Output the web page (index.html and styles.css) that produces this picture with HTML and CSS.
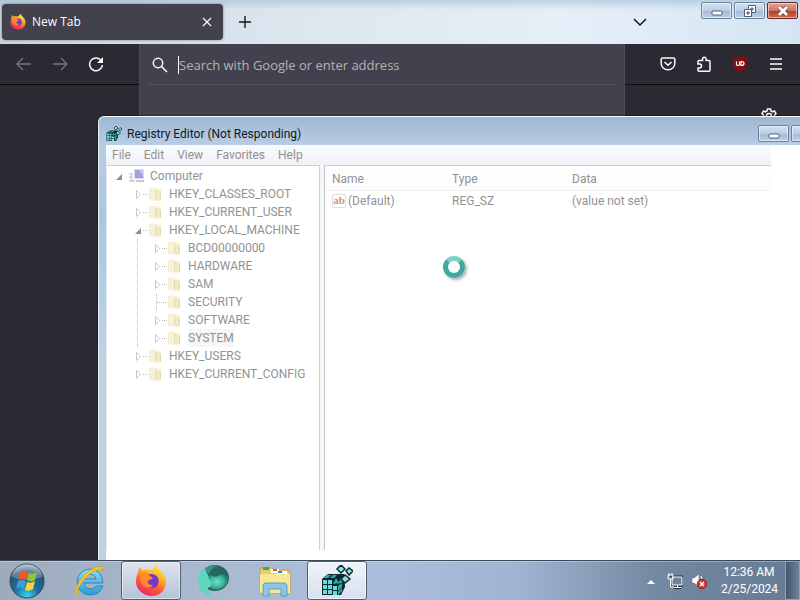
FILE: index.html
```
<!DOCTYPE html>
<html lang="en">
    <head>
        <meta charset="UTF-8" />
        <meta name="viewport" content="width=device-width, initial-scale=1.0"/>
        <title>Desktop</title>
        <link rel="stylesheet" href="styles.css">
    </head>
    <body>
        <!-- shared icons -->
        <svg class="sprite" aria-hidden="true">
            <defs>
                <linearGradient id="fx-body" x1="0.8" y1="0" x2="0.3" y2="1">
                    <stop offset="0" stop-color="#fff04a"/>
                    <stop offset="0.35" stop-color="#ffb02c"/>
                    <stop offset="0.65" stop-color="#ff5a36"/>
                    <stop offset="1" stop-color="#e8256f"/>
                </linearGradient>
                <linearGradient id="folder-fill">
                    <stop offset="0" stop-color="#f4f0d2"/>
                    <stop offset="1" stop-color="#faf7e4"/>
                </linearGradient>
                <radialGradient id="orb-fill" cx="0.5" cy="0.95" r="0.95">
                    <stop offset="0" stop-color="#3fd0f2"/>
                    <stop offset="0.4" stop-color="#166f9f"/>
                    <stop offset="0.75" stop-color="#2d5571"/>
                    <stop offset="1" stop-color="#a9c0ce"/>
                </radialGradient>
                <linearGradient id="ie-fill" x1="0" y1="0" x2="0" y2="1">
                    <stop offset="0" stop-color="#8fdcf8"/>
                    <stop offset="1" stop-color="#2a9bd8"/>
                </linearGradient>
                <radialGradient id="swirl-fill" cx="0.4" cy="0.5" r="0.6">
                    <stop offset="0" stop-color="#6fe0c6"/>
                    <stop offset="0.6" stop-color="#3fb39d"/>
                    <stop offset="1" stop-color="#24756d"/>
                </radialGradient>
            </defs>
            <symbol id="firefox" viewBox="0 0 32 32">
                <path d="M3 7c0-2 1-4 2-5 1 2 2 3 3 3 2-1 4-1 6 0l4-1c0-2 2-4 4-4 0 3 2 4 4 6 3 3 5 6 5 11 0 8-6 14-14 14S1 25 1 17c0-4 1-7 2-10z" fill="url(#fx-body)"/>
                <path d="M12 10c4-2 9-1 11 3 2 5-1 10-6 10s-8-3-8-7c0-2 3-3 4-4z" fill="#7139cf"/>
                <path d="M5 9c3-1 5-2 8-1l2 3c1 1 2 1 3 2-1 2-4 1-5 3s1 4 5 4c-2 4-9 3-11-1-2-4-3-7-2-10z" fill="#ff8a2a"/>
            </symbol>
            <symbol id="regedit" viewBox="0 0 32 32">
                <path d="M1 14l6-5h16l1 13-4 8H1z" fill="#0a2c30"/>
                <g fill="#6fd8d4">
                    <path d="M2 15h4v4H2zM7 15h4v4H7zM2 20h4v4H2zM7 20h4v4H7zM12 21h4v4h-4zM2 25h4v4H2zM7 25h4v4H7zM12 26h4v4h-4z"/>
                    <path d="M3 13l3-3h4l-3 3zM9 13l3-3h4l-3 3zM12 19l3-6 3 5zM17 19l3-6 2 4zM17 21l4-3v4l-4 4zM17 27l4-4v3l-4 4z" fill="#34a9a8"/>
                </g>
                <path d="M16 4l4-4 4 4-4 4zM25 6l3-3 4 3-4 4zM20 14l4-4 5 4-5 4z" fill="#8fdedb" stroke="#0a2c30" stroke-width="1.500"/>
            </symbol>
            <symbol id="folder" viewBox="0 0 16 16">
                <path d="M1 2l5-1 1 1h6v12l-4 1-8-1z" fill="url(#folder-fill)"/>
                <path d="M7 3l1 12 5-1V5l-3-1z" fill="#f1ebc4"/>
                <path d="M7.500 4v9M12.500 6v8" stroke="#e2dab0" fill="none"/>
            </symbol>
            <!-- tree arrows, with the dotted line to the folder -->
            <symbol id="closed" viewBox="0 0 16 18">
                <path d="M4.500 5.500l4 4-4 4z" fill="none" stroke="#c8c8c8"/>
                <path d="M11 9.500h5" stroke="#bbb" stroke-dasharray="1 1"/>
            </symbol>
            <symbol id="opened" viewBox="0 0 16 18">
                <path d="M9 7v6H3z" fill="#8d8d8d"/>
                <path d="M11 9.500h5" stroke="#bbb" stroke-dasharray="1 1"/>
            </symbol>
            <symbol id="opened-root" viewBox="0 0 16 18">
                <path d="M9 7v6H3z" fill="#8d8d8d"/>
            </symbol>
            <symbol id="leaf" viewBox="0 0 16 18">
                <path d="M5.500 0v18M6 9.500h10" fill="none" stroke="#bbb" stroke-dasharray="1 1"/>
            </symbol>
            <symbol id="minimize" viewBox="0 0 14 12">
                <rect x="2" y="6" width="10" height="4" rx="1" fill="#fff" stroke="#4d6078"/>
            </symbol>
        </svg>

        <div class="desktop">
            <main class="browser">
                <header class="tab-strip">
                    <div class="tab">
                        <svg class="icon-16"><use href="#firefox"/></svg>
                        <span class="tab-title">New Tab</span>
                        <button class="plain" aria-label="Close tab">
                            <svg class="icon-16" viewBox="0 0 16 16"><path d="M4 4l8 8M12 4l-8 8" stroke="#fbfbfe" stroke-width="1.200"/></svg>
                        </button>
                    </div>
                    <button class="plain new-tab" aria-label="New tab">
                        <svg class="icon-16" viewBox="0 0 16 16"><path d="M8 2v12M2 8h12" stroke="#15141a" stroke-width="1.400"/></svg>
                    </button>
                    <button class="plain all-tabs" aria-label="List all tabs">
                        <svg class="icon-16" viewBox="0 0 16 16"><path d="M2 5l6 6 6-6" fill="none" stroke="#15141a" stroke-width="1.500"/></svg>
                    </button>
                    <div class="caption-buttons">
                        <button class="caption" aria-label="Minimize"><svg><use href="#minimize"/></svg></button>
                        <button class="caption" aria-label="Restore">
                            <svg viewBox="0 0 14 12"><g fill="#fff" stroke="#4d6078"><path d="M5.500.5h7v7h-7z"/><path d="M8 3h2v2H8z" fill="#8fa6c2"/><path d="M1.500 4.500h7v7h-7z"/><path d="M4 7h2v2H4z" fill="#8fa6c2"/></g></svg>
                        </button>
                        <button class="caption caption-close" aria-label="Close">
                            <svg viewBox="0 0 14 12"><path d="M3 2l8 8M11 2l-8 8" stroke="#6d3434" stroke-width="4.500"/><path d="M3 2l8 8M11 2l-8 8" stroke="#fff" stroke-width="3"/></svg>
                        </button>
                    </div>
                </header>

                <nav class="toolbar">
                    <div class="nav-buttons">
                        <button class="plain dim" aria-label="Back"><svg class="icon-16" viewBox="0 0 16 16"><path d="M15 8H1M7 2L1 8l6 6" fill="none" stroke="currentColor" stroke-width="1.300"/></svg></button>
                        <button class="plain dim" aria-label="Forward"><svg class="icon-16" viewBox="0 0 16 16"><path d="M1 8h14M9 2l6 6-6 6" fill="none" stroke="currentColor" stroke-width="1.300"/></svg></button>
                        <button class="plain" aria-label="Reload"><svg class="icon-16" viewBox="0 0 16 16"><path d="M13.500 5A6.400 6.400 0 1 0 14.400 9" fill="none" stroke="currentColor" stroke-width="1.500"/><path d="M15 1v6H9z" fill="currentColor"/></svg></button>
                    </div>
                    <div class="urlbar">
                        <label class="urlbar-field">
                            <svg class="icon-16" viewBox="0 0 16 16"><circle cx="6" cy="6" r="4.700" fill="none" stroke="#fbfbfe" stroke-width="1.500"/><path d="M9.500 9.500L15 15" stroke="#fbfbfe" stroke-width="1.600"/></svg>
                            <span class="caret"></span>
                            <input type="text" placeholder="Search with Google or enter address" aria-label="Search or enter address">
                        </label>
                        <div class="urlbar-results"></div>
                    </div>
                    <div class="actions">
                        <button class="plain" aria-label="Save to Pocket"><svg class="icon-16" viewBox="0 0 16 16"><path d="M2.500 2h11q1.300 0 1.300 1.300V7.500A6.800 6.300 0 0 1 1.200 7.500V3.300Q1.200 2 2.500 2zM4.500 6L8 9.300 11.500 6" fill="none" stroke="currentColor" stroke-width="1.500"/></svg></button>
                        <button class="plain" aria-label="Extensions"><svg class="icon-16" viewBox="0 0 16 16"><path d="M2 8V5.500Q2 4.500 3 4.500H6.500V3a1.800 1.800 0 0 1 3.600 0v1.500H13q1 0 1 1v8.700q0 1-1 1H3q-1 0-1-1V12H3.500a1.900 1.900 0 0 0 0-4z" fill="none" stroke="currentColor" stroke-width="1.500"/></svg></button>
                        <button class="plain" aria-label="uBlock Origin"><svg class="icon-16" viewBox="0 0 16 16"><path d="M8 0q4 2 7 2v5q0 6-7 9-7-3-7-9V2q3 0 7-2z" fill="#850b10"/><path d="M4.500 5.500v3q0 1 1.500 1t1.500-1v-3M9 5.500v4q3 0 3-2t-3-2z" fill="none" stroke="#fff" stroke-width="1.200"/></svg></button>
                        <button class="plain" aria-label="Menu"><svg class="icon-16" viewBox="0 0 16 16"><path d="M2 3h12M2 8h12M2 13h12" stroke="currentColor" stroke-width="1.500"/></svg></button>
                    </div>
                </nav>

                <section class="page">
                    <button class="plain" aria-label="Customize new tab">
                        <svg class="icon-16" viewBox="0 0 16 16"><path d="M6.500 1h3l.5 2 1.500.8 2-.8 1.500 2.600L13.500 7.200v1.600l1.500 1.600-1.500 2.600-2-.8-1.500.8-.5 2h-3L6 13l-1.500-.8-2 .8L1 10.400l1.500-1.600V7.200L1 5.600 2.500 3l2 .8L6 3z" fill="none" stroke="currentColor" stroke-width="1.500"/><circle cx="8" cy="8" r="2.500" fill="none" stroke="currentColor" stroke-width="1.500"/></svg>
                    </button>
                </section>
            </main>

            <section class="window">
                <header class="title-bar">
                    <svg class="icon-16"><use href="#regedit"/></svg>
                    <h1>Registry Editor (Not Responding)</h1>
                    <div class="caption-buttons">
                        <button class="caption" aria-label="Minimize"><svg><use href="#minimize"/></svg></button>
                        <button class="caption" aria-label="Maximize"></button>
                        <button class="caption" aria-label="Close"></button>
                    </div>
                </header>
                <div class="client">
                    <div class="menu-bar">
                        <button class="plain">File</button>
                        <button class="plain">Edit</button>
                        <button class="plain">View</button>
                        <button class="plain">Favorites</button>
                        <button class="plain">Help</button>
                    </div>
                    <div class="panes">
                        <ul class="tree">
                            <li>
                                <div class="row">
                                    <svg class="arrow"><use href="#opened-root"/></svg>
                                    <svg class="icon-16" viewBox="0 0 16 16"><path d="M5 1h10v10H5z" fill="#dadaea"/><path d="M6 2h8v8H6z" fill="#a0a0da"/><path d="M10 2h4v6z" fill="#c4c4ee"/><path d="M7 12h8v2H7z" fill="#c8c8d4"/><path d="M1 5h3v9H1z" fill="#dfe3ea"/><path d="M0 6h3M0 9h3M0 13h6" stroke="#b5c0ce"/></svg>
                                    <span>Computer</span>
                                </div>
                                <ul class="keys">
                                    <li><div class="row"><svg class="arrow"><use href="#closed"/></svg><svg class="icon-16"><use href="#folder"/></svg><span>HKEY_CLASSES_ROOT</span></div></li>
                                    <li><div class="row"><svg class="arrow"><use href="#closed"/></svg><svg class="icon-16"><use href="#folder"/></svg><span>HKEY_CURRENT_USER</span></div></li>
                                    <li>
                                        <div class="row"><svg class="arrow"><use href="#opened"/></svg><svg class="icon-16"><use href="#folder"/></svg><span>HKEY_LOCAL_MACHINE</span></div>
                                        <ul class="branch">
                                            <li><div class="row"><svg class="arrow"><use href="#closed"/></svg><svg class="icon-16"><use href="#folder"/></svg><span>BCD00000000</span></div></li>
                                            <li><div class="row"><svg class="arrow"><use href="#closed"/></svg><svg class="icon-16"><use href="#folder"/></svg><span>HARDWARE</span></div></li>
                                            <li><div class="row"><svg class="arrow"><use href="#closed"/></svg><svg class="icon-16"><use href="#folder"/></svg><span>SAM</span></div></li>
                                            <li><div class="row"><svg class="arrow"><use href="#leaf"/></svg><svg class="icon-16"><use href="#folder"/></svg><span>SECURITY</span></div></li>
                                            <li><div class="row"><svg class="arrow"><use href="#closed"/></svg><svg class="icon-16"><use href="#folder"/></svg><span>SOFTWARE</span></div></li>
                                            <li><div class="row"><svg class="arrow"><use href="#closed"/></svg><svg class="icon-16"><use href="#folder"/></svg><span class="selected">SYSTEM</span></div></li>
                                        </ul>
                                    </li>
                                    <li><div class="row"><svg class="arrow"><use href="#closed"/></svg><svg class="icon-16"><use href="#folder"/></svg><span>HKEY_USERS</span></div></li>
                                    <li><div class="row"><svg class="arrow"><use href="#closed"/></svg><svg class="icon-16"><use href="#folder"/></svg><span>HKEY_CURRENT_CONFIG</span></div></li>
                                </ul>
                            </li>
                        </ul>
                        <div class="values">
                            <table>
                                <thead>
                                    <tr><th>Name</th><th>Type</th><th>Data</th></tr>
                                </thead>
                                <tbody>
                                    <tr>
                                        <td><span class="value-name"><span class="string-icon">ab</span>(Default)</span></td>
                                        <td>REG_SZ</td>
                                        <td>(value not set)</td>
                                    </tr>
                                </tbody>
                            </table>
                        </div>
                    </div>
                </div>
            </section>

            <footer class="taskbar">
                <button class="plain start" aria-label="Start">
                    <svg class="icon-36" viewBox="0 0 36 36">
                        <circle cx="18" cy="18" r="17" fill="url(#orb-fill)" stroke="#28465c"/>
                        <path d="M3 14a15 13 0 0 1 30 0q-14 5-30 0z" fill="#fff" opacity="0.25"/>
                        <path d="M11 9q4-3 8 0l-2 8q-4-2-8 0z" fill="#ee5a24"/>
                        <path d="M20 10q4 2 8-1l-2 8q-4 3-8 0z" fill="#8fc63d"/>
                        <path d="M9 18q4-2 8 0l-2 8q-4-3-8 0z" fill="#3f9be0"/>
                        <path d="M18 19q4 2 8-1l-2 8q-4 3-8 1z" fill="#ffd23c"/>
                    </svg>
                </button>
                <button class="plain task" aria-label="Internet Explorer">
                    <svg class="icon-32" viewBox="0 0 32 32">
                        <path d="M30 18H11q1 6 7 6 4 0 5-3h7q-3 9-13 9Q5 29 4 17 5 5 17 4q12 1 13 14zM11 14h12q-1-5-6-5t-6 5z" fill="url(#ie-fill)" fill-rule="evenodd" stroke="#1a78b8" stroke-width="0.800"/>
                        <path d="M6 31Q-1 31 4 21 11 6 24 2q7-2 6 4-1-3-6-1Q13 9 6 22q-4 7 0 9z" fill="#f6c926" stroke="#d49b12" stroke-width="0.600"/>
                    </svg>
                </button>
                <button class="plain task running" aria-label="Firefox"><svg class="icon-32"><use href="#firefox"/></svg></button>
                <button class="plain task" aria-label="Web browser">
                    <svg class="icon-32" viewBox="0 0 32 32">
                        <ellipse cx="18" cy="13" rx="14" ry="13" fill="#24655f"/>
                        <path d="M12 9q6 5 11 1 5-2 8 2 1 8-6 11-6 3-12 0z" fill="url(#swirl-fill)"/>
                        <path d="M8 3Q0 8 1 16q0 9 6 12 4 3 9 3-5-3-5-8 3-1 4-5-3-3-4-8-2-3-3-7z" fill="#62d6bd"/>
                        <path d="M8 3q6-4 13-2-6 1-9 8-3-2-4-6z" fill="#3b8f85"/>
                    </svg>
                </button>
                <button class="plain task" aria-label="Windows Explorer">
                    <svg class="icon-32" viewBox="0 0 32 32">
                        <path d="M1 3h12l2 2h14l2 3v20H1z" fill="#e9cf72" stroke="#c1a048"/>
                        <path d="M4 2h6v3H4z" fill="#3fae4a"/><path d="M12 4h8v4h-8z" fill="#fff"/><path d="M14 4h4v2h-4z" fill="#d65b3c"/><path d="M19 6h9v3h-9z" fill="#fff"/><path d="M19 6h4v2h-4z" fill="#3f7fc8"/>
                        <path d="M1 9h30v19H1z" fill="#f8e795"/>
                        <path d="M4 31V21q0-3 3-3h18q3 0 3 3v10h-6v-7H10v7z" fill="#8fc4e8" stroke="#5f9cca"/>
                    </svg>
                </button>
                <button class="plain task running active" aria-label="Registry Editor"><svg class="icon-32"><use href="#regedit"/></svg></button>
                <div class="tray">
                    <button class="plain" aria-label="Show hidden icons"><svg class="icon-16" viewBox="0 0 16 16"><path d="M4 11l4-4 4 4z" fill="#fff"/></svg></button>
                    <button class="plain" aria-label="Network"><svg class="icon-16" viewBox="0 0 16 16"><path d="M5 4h10v8H5zM7 14.500h7M10.500 12v2" fill="#6d839c" stroke="#222f3d" stroke-width="3"/><path d="M5 4h10v8H5zM7 14.500h7M10.500 12v2" fill="#6d839c" stroke="#fff"/><path d="M1 2h5v4H1zM2 0v2M5 0v2M3.500 6v8H7" fill="none" stroke="#fff"/></svg></button>
                    <button class="plain" aria-label="Volume"><svg class="icon-16" viewBox="0 0 16 16"><path d="M1 5h2l5-4v13l-5-4H1z" fill="#fff" stroke="#59697b" stroke-width="0.500"/><path d="M10 3q2 4 0 8" fill="none" stroke="#fff"/><circle cx="11" cy="11" r="4.700" fill="#d5332c" stroke="#a01c18"/><path d="M9 9l4 4M13 9l-4 4" stroke="#fff" stroke-width="1.500"/></svg></button>
                    <time class="clock"><span>12:36 AM</span><span>2/25/2024</span></time>
                    <button class="plain show-desktop" aria-label="Show desktop"></button>
                </div>
            </footer>

            <!-- busy cursor -->
            <div class="busy"></div>
        </div>
    </body>
</html>
```

FILE: styles.css
```
* {
    margin: 0;
    padding: 0;
    box-sizing: border-box;
}

body {
    font-family: Roboto, 'Open Sans', sans-serif;
    font-size: 12px;
    line-height: 18px;
}

ul {
    list-style: none;
}

.sprite {
    position: absolute;
    width: 0;
    height: 0;
}

.desktop {
    position: relative;
    display: flex;
    flex-direction: column;
    height: 100vh;
    overflow: hidden;
}

.plain {
    border: none;
    background: none;
    color: inherit;
    font: inherit;
    display: flex;
    align-items: center;
    justify-content: center;
}

.icon-16 {
    width: 16px;
    height: 16px;
    flex-shrink: 0;
}

.icon-32 {
    width: 32px;
    height: 32px;
}

.icon-36 {
    width: 36px;
    height: 36px;
}

/* browser */
.browser {
    flex: 1;
    display: flex;
    flex-direction: column;
    background: #2b2a33;
    color: #fbfbfe;
    font-family: 'Open Sans', sans-serif;
}

.tab-strip {
    display: flex;
    align-items: center;
    height: 44px;
    padding: 0 2px;
    background: linear-gradient(to bottom, rgba(160,190,210,0.6), rgba(220,232,244,0) 10px), linear-gradient(to right, #c9d5e2, #dde6ef 35%, #e6eff8 70%, #d5e5f4);
}

.tab {
    display: flex;
    align-items: center;
    gap: 6px;
    width: 221px;
    height: 36px;
    padding: 0 8px;
    border-radius: 4px;
    background: #42414d;
    box-shadow: 0 0 3px rgba(0,0,0,0.4);
}

.tab-title {
    flex: 1;
}

.new-tab {
    margin-left: 14px;
}

.all-tabs {
    margin-left: auto;
    margin-right: 53px;
}

.caption-buttons {
    display: flex;
    gap: 2px;
    align-self: flex-start;
    padding-top: 2px;
}

.caption {
    display: flex;
    align-items: center;
    justify-content: center;
    width: 31px;
    height: 17px;
    border: 1px solid #6c83a2;
    border-radius: 2px;
    background: linear-gradient(to bottom, #d3e0ef, #bccde2 50%, #a2b9d4 51%, #bdd0e6);
    box-shadow: inset 0 0 0 1px rgba(255,255,255,0.5);
}

.caption svg {
    width: 14px;
    height: 12px;
}

.caption-close {
    border-color: #5e2a2c;
    background: linear-gradient(to bottom, #e2a596, #d27560 50%, #b93a22 51%, #cf6a4e);
}

.toolbar {
    display: flex;
    height: 41px;
    border-bottom: 1px solid #0c0c0d;
}

.nav-buttons {
    display: flex;
    gap: 20px;
    width: 139px;
    padding-left: 16px;
}

.dim {
    color: #76757f;
}

.urlbar {
    position: relative;
    flex: 1;
    background: #42414d;
    border-left: 1px solid #4c4b58;
    border-right: 1px solid #4c4b58;
}

.urlbar-field {
    display: flex;
    align-items: center;
    height: 41px;
    padding: 0 12px;
}

.urlbar-field input {
    flex: 1;
    border: none;
    outline: none;
    background: none;
    color: #fbfbfe;
    font: 13px 'Open Sans', sans-serif;
}

.urlbar-field input::placeholder {
    color: #b4b3bb;
    opacity: 1;
}

.caret {
    width: 1px;
    height: 18px;
    margin-left: 10px;
    background: #fbfbfe;
}

/* suggestions panel hangs over the page */
.urlbar-results {
    position: absolute;
    top: 40px;
    left: -1px;
    right: -1px;
    height: 60px;
    padding: 0 8px;
    background: #42414d;
    border: 1px solid #4c4b58;
    border-top: none;
}

.urlbar-results::before {
    content: '';
    display: block;
    height: 1px;
    background: #52515e;
}

.actions {
    display: flex;
    gap: 20px;
    width: 175px;
    padding: 0 16px 0 35px;
}

.page {
    display: flex;
    flex: 1;
    justify-content: flex-end;
    align-items: flex-start;
    padding: 23px;
}

/* registry editor */
.window {
    position: absolute;
    top: 116px;
    right: -63px;
    bottom: 40px;
    left: 98px;
    display: flex;
    flex-direction: column;
    padding: 0 8px 0 7px;
    background: linear-gradient(to bottom, #9db7d3, #b9cde4 28px, #a9c7e2 100px, #bcd3e5 240px);
    border-top: 1px solid #fff;
    border-left: 1px solid #e8f1f8;
    border-radius: 6px 6px 0 0;
    box-shadow: 0 0 2px #000;
}

.title-bar {
    display: flex;
    align-items: center;
    gap: 5px;
    height: 28px;
    padding-top: 5px;
}

.title-bar h1 {
    flex: 1;
    color: #101820;
    font-size: 12px;
    font-weight: 400;
}

.title-bar .caption-buttons {
    align-self: center;
    padding: 0;
}

.client {
    flex: 1;
    display: flex;
    flex-direction: column;
    padding: 0 84px 10px 0;
    background: #fff;
    color: #929292;
}

.menu-bar {
    display: flex;
    height: 20px;
    gap: 13px;
    padding: 0 6px;
    background: linear-gradient(to bottom, #f8fcff, #f0f1f6);
}

.panes {
    flex: 1;
    display: flex;
    gap: 4px;
    background: #f6f6f6;
}

.tree {
    width: 214px;
    padding: 1px 6px;
    background: #fff;
    border: 1px solid #d0d1d5;
    border-bottom: none;
    border-left-color: #e8e8ea;
}

.keys {
    padding-left: 19px;
}

.branch {
    margin-left: 5px;
    padding-left: 13px;
    border-left: 1px dotted #bbb;
}

.row {
    display: flex;
    align-items: center;
    height: 18px;
    white-space: nowrap;
}

.row .icon-16 {
    margin-right: 5px;
}

.arrow {
    width: 16px;
    height: 18px;
}

.selected {
    background: #f6f6f6;
}

.values {
    flex: 1;
    background: #fff;
    border-top: 1px solid #d0d1d5;
    border-left: 1px solid #c4c4c8;
}

table {
    width: 100%;
    table-layout: fixed;
    border-collapse: collapse;
}

th {
    height: 24px;
    padding: 2px 7px 0;
    border-bottom: 1px solid #f0f0f0;
    background: linear-gradient(to bottom, #fff, #fbfbfb);
    font-weight: 400;
    text-align: left;
}

th:nth-child(-n+2) {
    width: 120px;
}

td {
    height: 22px;
    padding: 0 7px;
}

.value-name {
    display: flex;
    align-items: center;
    gap: 2px;
}

.string-icon {
    width: 14px;
    height: 14px;
    border: 1px solid #e4dcdc;
    border-radius: 2px;
    color: #d98d80;
    font: bold 11px/10px 'Liberation Serif', serif;
    text-align: center;
}

/* taskbar */
.taskbar {
    position: relative;
    display: flex;
    height: 40px;
    border-top: 1px solid #3d4a5a;
    background: linear-gradient(to right, #9dabbb, #a9b9d0 25%, #abbfdc 48%, #9fb4d0 65%, #7389a3 82%, #667c94);
    box-shadow: inset 0 1px 0 rgba(255,255,255,0.3);
}

.start {
    width: 54px;
}

.task {
    width: 60px;
    margin-right: 2px;
}

.start + .task {
    margin-left: 5px;
}

.running {
    border: 1px solid #4f6075;
    border-radius: 3px;
    background: linear-gradient(to bottom, #dde4ee, #b6c2d6);
    box-shadow: inset 0 0 0 1px rgba(255,255,255,0.5);
}

.active {
    background: linear-gradient(to bottom, #eff4fa, #d6e0ee);
}

.tray {
    display: flex;
    gap: 8px;
    margin-left: auto;
    color: #fff;
}

.clock {
    display: flex;
    flex-direction: column;
    justify-content: center;
    width: 62px;
    padding-left: 6px;
    line-height: 17px;
    text-align: center;
}

.show-desktop {
    width: 15px;
    border: 1px solid #8fa3b8;
    background: linear-gradient(to right, #44586c, #6c8298);
}

.busy {
    position: absolute;
    top: 256px;
    left: 443px;
    width: 22px;
    height: 22px;
    border: 5px solid #3fa99b;
    border-top-color: #7fd0c4;
    border-radius: 50%;
    box-shadow: 2px 2px 3px rgba(60,60,90,0.4);
}
```
